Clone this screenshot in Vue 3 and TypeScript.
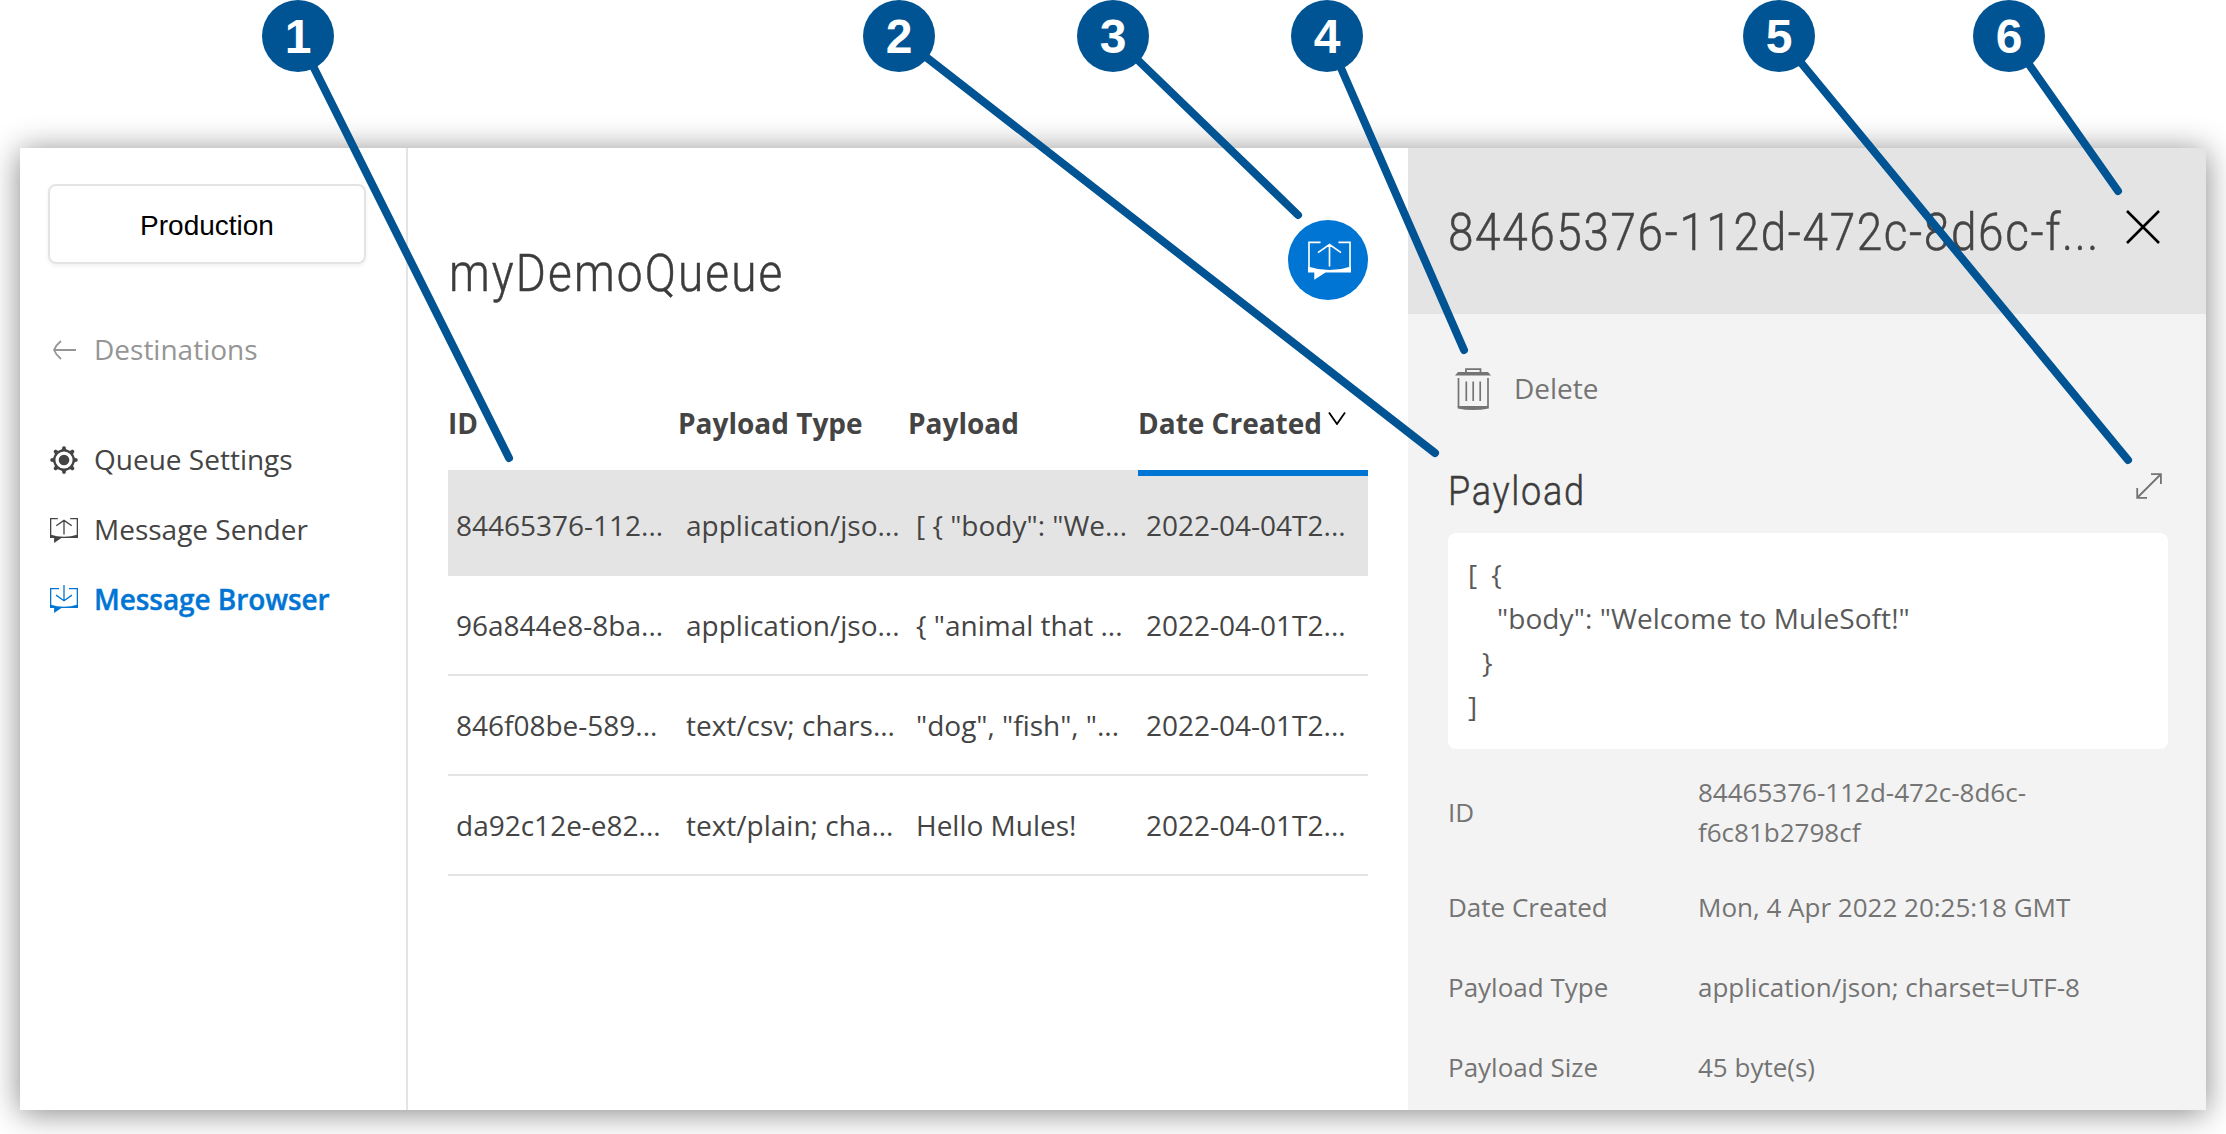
<script setup lang="ts">
interface Callout { n: number; x: number; tx: number; ty: number }
interface Row { id: string; type: string; payload: string; date: string; selected?: boolean }

const callouts: Callout[] = [
  { n: 1, x: 298, tx: 509, ty: 458 },
  { n: 2, x: 899, tx: 1435, ty: 453 },
  { n: 3, x: 1113, tx: 1298, ty: 215 },
  { n: 4, x: 1327, tx: 1464, ty: 350 },
  { n: 5, x: 1779, tx: 2128, ty: 460 },
  { n: 6, x: 2009, tx: 2118, ty: 191 },
]

const rows: Row[] = [
  { id: '84465376-112...', type: 'application/jso...', payload: '[ { "body": "We...', date: '2022-04-04T2...', selected: true },
  { id: '96a844e8-8ba...', type: 'application/jso...', payload: '{ "animal that ...', date: '2022-04-01T2...' },
  { id: '846f08be-589...', type: 'text/csv; chars...', payload: '"dog", "fish", "...', date: '2022-04-01T2...' },
  { id: 'da92c12e-e82...', type: 'text/plain; cha...', payload: 'Hello Mules!', date: '2022-04-01T2...' },
]

const details = [
  { label: 'ID', lines: ['84465376-112d-472c-8d6c-', 'f6c81b2798cf'] },
  { label: 'Date Created', lines: ['Mon, 4 Apr 2022 20:25:18 GMT'] },
  { label: 'Payload Type', lines: ['application/json; charset=UTF-8'] },
  { label: 'Payload Size', lines: ['45 byte(s)'] },
]

const teeth = [0, 45, 90, 135, 180, 225, 270, 315]
</script>

<template>
  <div class="page">
    <div class="window">
      <aside class="sidebar">
        <button class="env">Production</button>
        <nav>
          <a class="item back">
            <svg class="ico" viewBox="0 0 28 28"><path d="M26 14H4M11 5Q6 9 4 14Q6 19 11 23" fill="none" stroke="currentColor" stroke-width="1.8" /></svg>
            <span>Destinations</span>
          </a>
          <a class="item">
            <svg class="ico" viewBox="0 0 28 28">
              <circle cx="14" cy="14" r="9.7" fill="none" stroke="currentColor" stroke-width="2.2" />
              <circle cx="14" cy="14" r="5.3" fill="currentColor" />
              <path v-for="t in teeth" :key="t" d="M12.4 0.8Q14 -0.4 15.6 0.8L16 3L17.4 5H10.6L12 3Z" fill="currentColor" :transform="`rotate(${t} 14 14)`" />
            </svg>
            <span>Queue Settings</span>
          </a>
          <a class="item">
            <svg class="ico chat" viewBox="0 0 130 116">
              <path d="M36 3H3V90M94 3H127V90M65 12V76M29 36L65 11L101 36" fill="none" stroke="currentColor" stroke-width="6" />
              <path d="M0 76Q65 97 130 76V93H53L19 116V93H0Z" fill="currentColor" />
            </svg>
            <span>Message Sender</span>
          </a>
          <a class="item active">
            <svg class="ico chat" viewBox="0 0 130 116">
              <path d="M42 3H3V90M88 3H127V90M65 -14V58M28 33L65 59L102 33" fill="none" stroke="currentColor" stroke-width="6" />
              <path d="M0 76Q65 97 130 76V93H53L19 116V93H0Z" fill="currentColor" />
            </svg>
            <span>Message Browser</span>
          </a>
        </nav>
      </aside>

      <main class="main">
        <header class="main-head">
          <h1 class="din title">myDemoQueue</h1>
          <button class="fab">
            <svg viewBox="0 0 130 116">
              <path d="M38 3H3V90M92 3H127V90M65 10V76M30 34L65 10L100 34" fill="none" stroke="currentColor" stroke-width="5" />
              <path d="M0 76Q65 98 130 76V94H53L19 116V94H0Z" fill="currentColor" />
            </svg>
          </button>
        </header>
        <div class="table">
          <div class="tr th">
            <div>ID</div>
            <div>Payload Type</div>
            <div>Payload</div>
            <div class="sorted">
              <span>Date Created</span>
              <svg viewBox="0 0 18 13"><path d="M1 0.5L9 12L17 0.5" fill="none" stroke="#000" stroke-width="1.8" /></svg>
            </div>
          </div>
          <div v-for="r in rows" :key="r.id" class="tr td" :class="{ selected: r.selected }">
            <div>{{ r.id }}</div>
            <div>{{ r.type }}</div>
            <div>{{ r.payload }}</div>
            <div>{{ r.date }}</div>
          </div>
        </div>
      </main>

      <section class="panel">
        <header class="panel-head">
          <h2 class="din panel-title">84465376-112d-472c-8d6c-f...</h2>
          <svg class="close" viewBox="0 0 34 34"><path d="M1 1L33 33M33 1L1 33" stroke="#000" stroke-width="2.6" /></svg>
        </header>
        <div class="delete">
          <svg viewBox="0 0 36 42">
            <path d="M11 5V1.2H25.5V5" fill="none" stroke="currentColor" stroke-width="1.8" />
            <path d="M3 4H33L36 7.5H0Z" fill="currentColor" />
            <path d="M3.5 10V39M33 10V39M11.3 13.5V33M18.2 13.5V33M25.2 13.5V33" stroke="currentColor" stroke-width="1.7" />
            <path d="M2.7 38H33.8V40.5Q18 43.5 2.7 40.5Z" fill="currentColor" />
          </svg>
          <span>Delete</span>
        </div>
        <div class="payload-head">
          <h3 class="din payload-title">Payload</h3>
          <svg viewBox="0 0 26 26"><path d="M15 1.2H24.9V11M24.5 1.5L1.5 24.5M1.2 15V24.8H11" fill="none" stroke="currentColor" stroke-width="1.8" /></svg>
        </div>
        <div class="code">
          <div class="l1"><span>[</span><span>{</span></div>
          <div class="l2">"body": "Welcome to MuleSoft!"</div>
          <div class="l3">}</div>
          <div>]</div>
        </div>
        <dl class="details">
          <div v-for="d in details" :key="d.label" class="detail">
            <dt>{{ d.label }}</dt>
            <dd><div v-for="l in d.lines" :key="l">{{ l }}</div></dd>
          </div>
        </dl>
      </section>
    </div>

    <svg class="lines" width="2226" height="1134">
      <line v-for="c in callouts" :key="c.n" :x1="c.x" y1="36" :x2="c.tx" :y2="c.ty" />
    </svg>
    <div v-for="c in callouts" :key="c.n" class="badge" :style="{ left: c.x - 36 + 'px' }">{{ c.n }}</div>
  </div>
</template>

<style>
body { margin: 0; background: #fff; }
</style>

<style scoped>
* { box-sizing: border-box; }
.page {
  position: relative;
  width: 2226px;
  height: 1134px;
  padding: 148px 20px 24px;
  overflow: hidden;
  background: #fff;
  font-family: "Open Sans", "Noto Sans", sans-serif;
  font-size: 28px;
  color: #444;
}
.window {
  display: flex;
  height: 962px;
  background: #fff;
  box-shadow: 0 3px 30px rgba(0, 0, 0, 0.48);
}
h1, h2, h3, dl, dd { margin: 0; }
.din {
  font-family: Roboto, sans-serif;
  font-weight: 300;
  white-space: nowrap;
  -webkit-text-stroke: 0.5px currentColor;
  transform: scaleX(0.9);
  transform-origin: 0 50%;
}

.sidebar { flex: none; width: 388px; border-right: 2px solid #e4e4e4; padding: 36px 28px; }
.env {
  display: block;
  width: 318px;
  height: 80px;
  border: 2px solid #e4e4e4;
  border-radius: 8px;
  background: #fff;
  box-shadow: 0 2px 4px rgba(0, 0, 0, 0.06);
  font: 28px "Liberation Sans", Arial, sans-serif;
  color: #000;
  padding: 3px 0 0;
}
.item { display: flex; align-items: center; height: 70px; gap: 16px; padding-left: 2px; }
.item span { padding-bottom: 2px; }
.ico { width: 28px; height: 28px; overflow: visible; flex: none; }
.ico.chat { height: 25px; }
.back { margin: 51px 0 40px; color: #959595; }
.active { color: #0075d4; font-weight: 600; }
.active span { letter-spacing: -0.07px; -webkit-text-stroke: 0.4px currentColor; }

.main { flex: none; width: 1000px; padding: 72px 40px 0; }
.main-head { display: flex; justify-content: space-between; height: 178px; }
.title { font-size: 51px; line-height: 60px; margin: 24px 0 0 1px; letter-spacing: 2.4px; color: #3c3c3c; }
.fab {
  display: flex;
  align-items: center;
  justify-content: center;
  width: 80px;
  height: 80px;
  border: 0;
  padding: 0 0 0 2px;
  border-radius: 50%;
  background: #0075d4;
  color: #fff;
}
.fab svg { width: 43px; height: 39px; }
.tr { display: grid; grid-template-columns: repeat(4, 230px); }
.tr > div { white-space: nowrap; }
.th { height: 78px; font-weight: 700; color: #444; line-height: 50px; }
.th > div { height: 78px; border-bottom: 6px solid transparent; }
.th > .sorted { border-color: #0075d4; display: flex; gap: 6px; position: relative; z-index: 1; }
.sorted svg { width: 18px; height: 13px; margin-top: 14px; }
.td { height: 100px; border-bottom: 2px solid #e4e4e4; line-height: 98px; }
.td > div { padding-left: 8px; }
.selected { background: #e4e4e4; margin-top: -6px; padding-top: 6px; height: 106px; }

.panel { flex: none; width: 798px; background: #f3f3f3; color: #747474; }
.panel-head { display: flex; justify-content: space-between; height: 166px; background: #e4e4e4; padding: 55px 46px 0 40px; }
.panel-title { font-size: 51px; line-height: 60px; width: 660px; letter-spacing: 1.8px; color: #444; }
.close { width: 34px; height: 34px; margin-top: 7px; flex: none; }
.delete { display: flex; gap: 23px; height: 42px; margin: 54px 0 0 47px; line-height: 40px; }
.delete svg { width: 36px; height: 42px; }
.payload-head { display: flex; justify-content: space-between; margin: 55px 44px 0 40px; height: 68px; }
.payload-title { font-size: 40px; line-height: 48px; margin-top: 3px; letter-spacing: 1.9px; color: #3c3c3c; }
.payload-head svg { width: 26px; height: 26px; margin-top: 8px; }
.code {
  margin: 0 38px 0 40px;
  height: 216px;
  padding: 19px 20px;
  border-radius: 8px;
  background: #fff;
  color: #595959;
  line-height: 44px;
}
.l1 { display: flex; gap: 14px; }
.l2 { padding-left: 29px; letter-spacing: 0.08px; }
.l3 { padding-left: 14px; }
.details { font-size: 26px; line-height: 40px; padding: 3px 40px 0; }
.detail { display: flex; align-items: center; padding: 20px 0; }
.detail:first-child { padding: 20px 0 15px; }
.detail dt { width: 250px; }

.lines { position: absolute; left: 0; top: 0; }
.lines line { stroke: #005493; stroke-width: 8px; stroke-linecap: round; }
.badge {
  position: absolute;
  top: 0;
  width: 72px;
  height: 72px;
  border-radius: 50%;
  background: #005493;
  color: #fff;
  font: bold 48px/73px "Liberation Sans", Arial, sans-serif;
  text-align: center;
}
</style>
